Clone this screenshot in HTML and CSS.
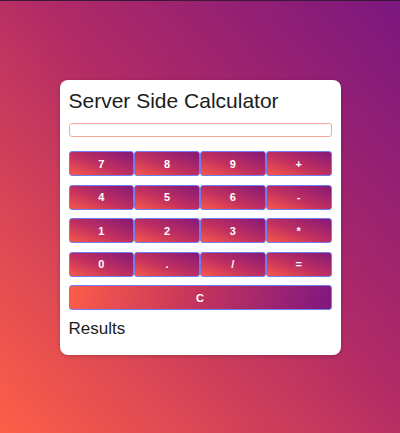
FILE: index.html
```html
<!DOCTYPE html>
<html>
<head>
<meta charset="utf-8">
<link rel="stylesheet" href="styles.css">
</head>
<body>
<div class="page">
  <div class="card">
    <h1 class="title">Server Side Calculator</h1>
    <input class="display" type="text">
    <div class="keys">
      <button class="key">7</button>
      <button class="key">8</button>
      <button class="key">9</button>
      <button class="key">+</button>
      <button class="key">4</button>
      <button class="key">5</button>
      <button class="key">6</button>
      <button class="key">-</button>
      <button class="key">1</button>
      <button class="key">2</button>
      <button class="key">3</button>
      <button class="key">*</button>
      <button class="key">0</button>
      <button class="key">.</button>
      <button class="key">/</button>
      <button class="key">=</button>
      <button class="key key-wide">C</button>
    </div>
    <h2 class="results">Results</h2>
  </div>
</div>
</body>
</html>
```

FILE: styles.css
```css
* { box-sizing: border-box; }
html, body {
  margin: 0;
  height: 100%;
}
body {
  font-family: "Liberation Sans", Arial, sans-serif;
  background: linear-gradient(to top right, #fe5f47 0%, #b12a66 55%, #7b177f 100%);
  border-top: 1px solid #3a1838;
}
.page {
  display: flex;
  justify-content: center;
  padding-top: 79px;
}
.card {
  width: 281px;
  background: #fff;
  border-radius: 8px;
  padding: 9px 9px 17px;
  display: flex;
  flex-direction: column;
  box-shadow: 0 1px 4px rgba(0,0,0,0.2);
}
.title {
  margin: 0;
  font-size: 21px;
  font-weight: normal;
  color: #1c1c1c;
  line-height: 24px;
}
.display {
  margin: 10px 0 0;
  height: 14px;
  width: 100%;
  border: 1px solid #f7a89c;
  border-radius: 3px;
  padding: 0;
  outline: none;
}
.keys {
  margin-top: 14px;
  display: grid;
  grid-template-columns: repeat(4, 1fr);
  row-gap: 8.5px;
}
.key {
  height: 25px;
  margin: 0;
  border: 1px solid #6f7df0;
  border-radius: 3px;
  background: linear-gradient(to top right, #f8584a 0%, #c1305f 45%, #851879 100%);
  color: #fff;
  font-family: "Liberation Sans", Arial, sans-serif;
  font-size: 11px;
  font-weight: bold;
  padding: 0;
}
.key-wide {
  grid-column: 1 / -1;
  background: linear-gradient(100deg, #fc5c4a 0%, #c2335d 50%, #7f1880 100%);
}
.results {
  margin: 9px 0 0;
  font-size: 17px;
  font-weight: normal;
  color: #1c1c1c;
  line-height: 19px;
}
```
